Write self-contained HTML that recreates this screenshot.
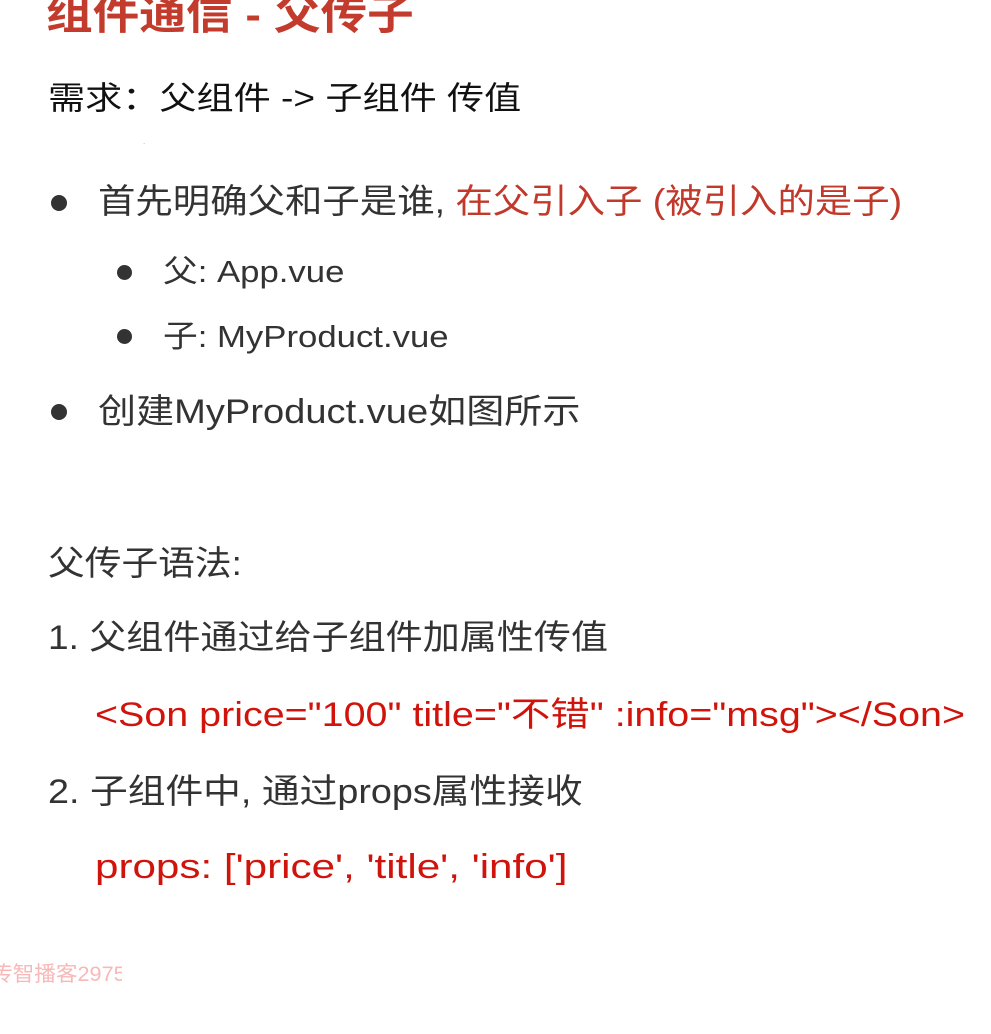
<!DOCTYPE html>
<html><head><meta charset="utf-8"><style>
html,body{margin:0;padding:0;background:#fff;width:991px;height:1034px;overflow:hidden;position:relative}
.t{position:absolute;white-space:nowrap;font-family:"Liberation Sans","Noto Sans CJK SC",sans-serif;color:#333;line-height:1;transform-origin:0 0}
.r{color:#c0392b}
.c{color:#d0140c}
.dot{position:absolute;border-radius:50%;background:#333}
</style></head><body>
<div class="t" style="left:46px;top:-6px;font-size:42px;font-weight:bold;color:#c23b2c;transform:scaleX(1.11)">组件通信 - 父传子</div>
<div class="t" style="left:48px;top:82px;font-size:32px;color:#111;transform:scaleX(1.16)">需求：父组件 -&gt; 子组件 传值</div>
<div class="t" style="left:143px;top:138px;font-size:8px;color:#e88">.</div>

<div class="dot" style="left:51px;top:195px;width:16px;height:16px"></div>
<div class="t" style="left:98px;top:185px;font-size:34px;transform:scaleX(1.10)">首先明确父和子是谁, <span class="r">在父引入子 (被引入的是子)</span></div>

<div class="dot" style="left:117px;top:265px;width:15px;height:15px"></div>
<div class="t" style="left:163px;top:256px;font-size:31px;transform:scaleX(1.12)">父: App.vue</div>
<div class="dot" style="left:117px;top:329px;width:15px;height:15px"></div>
<div class="t" style="left:163px;top:321px;font-size:31px;transform:scaleX(1.12)">子: MyProduct.vue</div>

<div class="dot" style="left:51px;top:404px;width:16px;height:16px"></div>
<div class="t" style="left:98px;top:395px;font-size:34px;transform:scaleX(1.12)">创建MyProduct.vue如图所示</div>

<div class="t" style="left:48px;top:547px;font-size:34px;transform:scaleX(1.08)">父传子语法:</div>
<div class="t" style="left:48px;top:621px;font-size:34px;transform:scaleX(1.09)">1. 父组件通过给子组件加属性传值</div>
<div class="t c" style="left:95px;top:698px;font-size:34px;transform:scaleX(1.16)">&lt;Son price="100" title="不错" :info="msg"&gt;&lt;/Son&gt;</div>
<div class="t" style="left:48px;top:775px;font-size:34px;transform:scaleX(1.11)">2. 子组件中, 通过props属性接收</div>
<div class="t c" style="left:95px;top:850px;font-size:34px;transform:scaleX(1.24)">props: ['price', 'title', 'info']</div>

<div style="position:absolute;left:0;top:960px;width:122px;height:32px;overflow:hidden">
<div class="t" style="left:-9px;top:4px;font-size:21px;color:#f8b8b8;transform:scaleX(1.03)">传智播客29759</div>
</div>
</body></html>
